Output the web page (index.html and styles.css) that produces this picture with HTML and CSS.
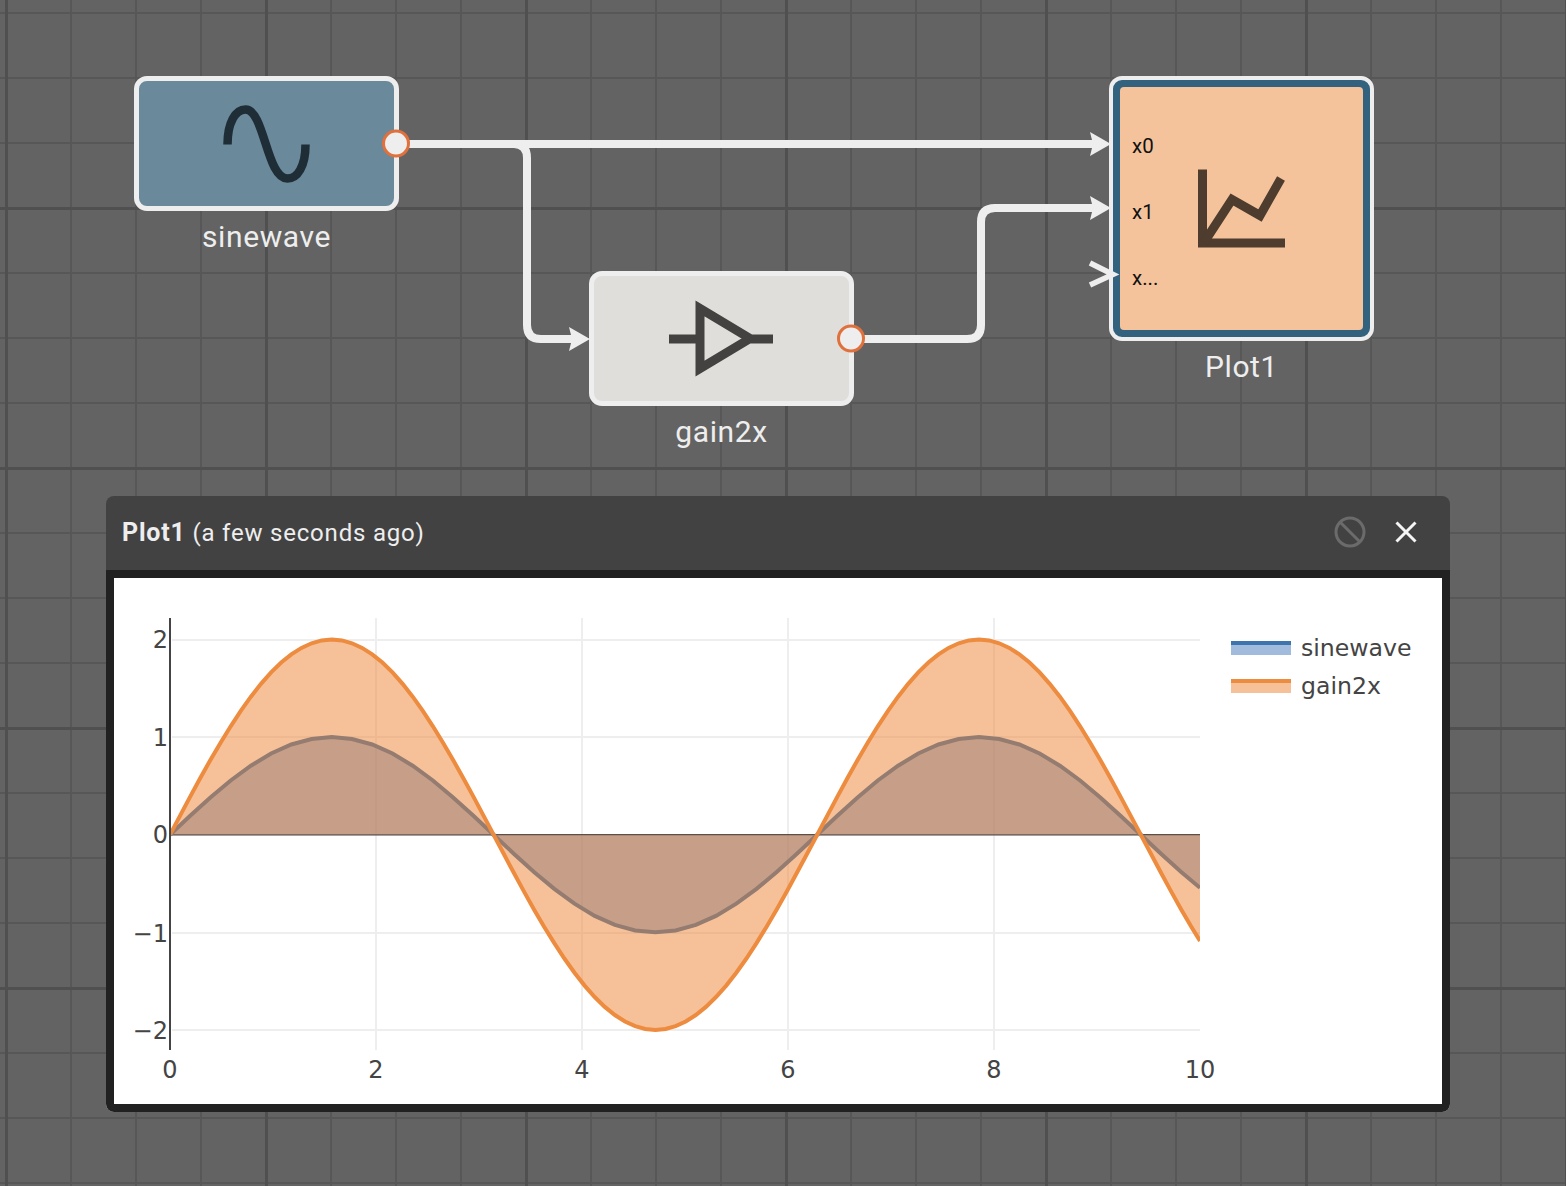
FILE: index.html
```html
<!DOCTYPE html>
<html lang="en">
<head>
    <meta charset="UTF-8">
    <meta name="viewport" content="width=device-width, initial-scale=1.0">
    <title>Plot1</title>
    <link rel="stylesheet" href="styles.css">
</head>
<body>
    <div class="canvas">
        <div class="block block-sine">
            <div class="node node-sine">
                <svg class="node-icon" width="100" height="100" viewBox="216.5 93.5 100 100">
                    <path class="icon-sine" d="M227 144 C227 122 235 109 245 109 C264 109 266 178 287 178 C297 178 305 166 305 144"/>
                </svg>
            </div>
            <div class="node-name">sinewave</div>
        </div>

        <div class="block block-gain">
            <div class="node node-gain">
                <svg class="node-icon" width="120" height="120" viewBox="662 278.5 120 120">
                    <path class="icon-gain" d="M669 338.5 H697 M750 338.5 H773 M700 308 V368 L750 338 Z"/>
                </svg>
            </div>
            <div class="node-name">gain2x</div>
        </div>

        <div class="block block-plot">
            <div class="node node-plot">
                <div class="plot-face">
                    <div class="ports">
                        <span>x0</span>
                        <span>x1</span>
                        <span>x...</span>
                    </div>
                    <svg class="node-icon" width="120" height="120" viewBox="1182 148.5 120 120">
                        <path class="icon-chart" d="M1202.5 169 V242.5 H1285"/>
                        <path class="icon-chart" d="M1204 242 L1232 199 L1260 215 L1281 178"/>
                    </svg>
                </div>
            </div>
            <div class="node-name">Plot1</div>
        </div>

        <svg class="wires" width="1566" height="1186" viewBox="0 0 1566 1186">
            <path class="wire" d="M398 144 H1096"/>
            <path class="wire" d="M514 144 Q527 144 527 158 V325 Q527 339 541 339 H576"/>
            <path class="wire" d="M864 339 H967 Q981 339 981 325 V222 Q981 208 995 208 H1096"/>
            <path class="arrow" d="M1090 132 L1111 144 L1090 156 L1093 144 Z"/>
            <path class="arrow" d="M1090 196 L1111 208 L1090 220 L1093 208 Z"/>
            <path class="arrow" d="M569 327 L590 339 L569 351 L572 339 Z"/>
            <path class="chevron" d="M1090 263 L1113 274.5 L1090 285"/>
            <circle class="port" cx="396" cy="143.5" r="12.5"/>
            <circle class="port" cx="851" cy="338.5" r="12.5"/>
        </svg>

        <div class="window">
            <div class="window-head">
                <div class="window-title"><b>Plot1</b> <span>(a few seconds ago)</span></div>
                <div class="window-tools">
                    <svg width="32" height="32" viewBox="0 0 32 32">
                        <circle class="tool-ban" cx="16" cy="16" r="14"/>
                        <path class="tool-ban" d="M6 6 L26 26"/>
                    </svg>
                    <svg width="24" height="24" viewBox="0 0 24 24">
                        <path class="tool-close" d="M2.5 2.5 L21.5 21.5 M21.5 2.5 L2.5 21.5"/>
                    </svg>
                </div>
            </div>
            <div class="window-body">
                <svg class="chart" width="1328" height="526" viewBox="114 578 1328 526">
                    <defs>
                        <clipPath id="plot-area"><rect x="170" y="610" width="1030" height="450"/></clipPath>
                    </defs>

                    <path class="grid" d="M376 618 V1050 M582 618 V1050 M788 618 V1050 M994 618 V1050"/>
                    <path class="grid" d="M172 640 H1200 M172 737 H1200 M172 933 H1200 M172 1030 H1200"/>
                    <path class="zero" d="M170 834.7 H1200"/>

                    <g clip-path="url(#plot-area)">
                        <path id="sine-fill" class="fill-blue"/>
                        <path id="sine-line" class="line-blue"/>
                        <path id="gain-fill" class="fill-orange"/>
                        <path id="gain-line" class="line-orange"/>
                    </g>

                    <path class="axis" d="M170 618 V1050"/>

                    <text class="tick" x="168" y="648" text-anchor="end">2</text>
                    <text class="tick" x="168" y="746" text-anchor="end">1</text>
                    <text class="tick" x="168" y="843" text-anchor="end">0</text>
                    <text class="tick" x="168" y="942" text-anchor="end">−1</text>
                    <text class="tick" x="168" y="1039" text-anchor="end">−2</text>

                    <text class="tick" x="170" y="1078" text-anchor="middle">0</text>
                    <text class="tick" x="376" y="1078" text-anchor="middle">2</text>
                    <text class="tick" x="582" y="1078" text-anchor="middle">4</text>
                    <text class="tick" x="788" y="1078" text-anchor="middle">6</text>
                    <text class="tick" x="994" y="1078" text-anchor="middle">8</text>
                    <text class="tick" x="1200" y="1078" text-anchor="middle">10</text>

                    <rect class="swatch-blue" x="1231" y="641" width="60" height="14"/>
                    <path class="line-blue" d="M1231 643 H1291"/>
                    <text class="tick legend-name" x="1301" y="656">sinewave</text>

                    <rect class="swatch-orange" x="1231" y="679" width="60" height="14"/>
                    <path class="line-orange" d="M1231 681 H1291"/>
                    <text class="tick legend-name" x="1301" y="694">gain2x</text>
                </svg>
            </div>
        </div>
    </div>
    <script src="chart.js"></script>
</body>
</html>
```

FILE: styles.css
```css
body {
    margin: 0;
    padding: 0;
    background: #636363;
    font-family: Roboto, Arial, sans-serif;
}
.canvas {
    position: relative;
    width: 1566px;
    height: 1186px;
    overflow: hidden;
    background-color: #636363;
    background-image:
        linear-gradient(to right, #505050 3px, transparent 3px),
        linear-gradient(to bottom, #505050 3px, transparent 3px),
        linear-gradient(to right, #575757 2px, transparent 2px),
        linear-gradient(to bottom, #575757 2px, transparent 2px);
    background-size: 260px 260px, 260px 260px, 65px 65px, 65px 65px;
    background-position: 5px 0, 0 207px, 5px 0, 0 12px;
}

.block {
    position: absolute;
    width: 265px;
    display: flex;
    flex-direction: column;
    align-items: center;
}
.block-sine { left: 134px; top: 76px; }
.block-gain { left: 589px; top: 271px; }
.block-plot { left: 1109px; top: 76px; }

.node {
    box-sizing: border-box;
    width: 265px;
    height: 135px;
    border: 5px solid #eeeeee;
    border-radius: 13px;
    display: flex;
    align-items: center;
    justify-content: center;
}
.node-sine { background: #6a899b; }
.node-gain { background: #e0dedb; }
.node-plot {
    height: 265px;
    border-width: 4px;
    background: #33627f;
    padding: 7px;
}
.plot-face {
    position: relative;
    flex: 1;
    align-self: stretch;
    background: #f4c39c;
    border-radius: 4px;
    display: flex;
    align-items: center;
    justify-content: center;
}
.node-icon {
    display: block;
}
.icon-sine {
    fill: none;
    stroke: #1f2d36;
    stroke-width: 8.5;
}
.icon-gain {
    fill: none;
    stroke: #444240;
    stroke-width: 9;
}
.icon-chart {
    fill: none;
    stroke: #4e3c2e;
    stroke-width: 9;
}
.node-name {
    margin-top: 8px;
    color: #eeeeee;
    font-size: 30px;
    line-height: 36px;
    letter-spacing: 0.6px;
}

.ports {
    position: absolute;
    left: 12px;
    top: 48px;
    display: flex;
    flex-direction: column;
    gap: 44px;
    color: #111111;
    font-size: 20.5px;
    line-height: 22px;
}

.wires {
    position: absolute;
    left: 0;
    top: 0;
    pointer-events: none;
}
.wire {
    fill: none;
    stroke: #eeeeee;
    stroke-width: 8;
}
.arrow {
    fill: #eeeeee;
}
.chevron {
    fill: none;
    stroke: #eeeeee;
    stroke-width: 5.5;
}
.port {
    fill: #eeeeee;
    stroke: #e0703c;
    stroke-width: 3;
}

.window {
    position: absolute;
    left: 106px;
    top: 496px;
    width: 1344px;
    height: 616px;
    border-radius: 8px;
    overflow: hidden;
    display: flex;
    flex-direction: column;
}
.window-head {
    box-sizing: border-box;
    height: 74px;
    background: #424242;
    padding: 0 32px 2px 16px;
    display: flex;
    align-items: center;
    justify-content: space-between;
}
.window-title {
    color: #eeeeee;
    font-size: 24px;
    letter-spacing: 0.8px;
    white-space: pre;
}
.window-title b {
    font-size: 25px;
    font-weight: 700;
    letter-spacing: 0.8px;
}
.window-tools {
    display: flex;
    align-items: center;
    gap: 28px;
}
.window-tools svg {
    display: block;
}
.tool-ban {
    fill: none;
    stroke: #6b6b6b;
    stroke-width: 3;
}
.tool-close {
    fill: none;
    stroke: #f5f5f5;
    stroke-width: 3;
}
.window-body {
    flex: 1;
    background: #ffffff;
    border: 8px solid #212121;
}
.chart {
    display: block;
}

.grid {
    fill: none;
    stroke: #eeeeee;
    stroke-width: 2;
}
.zero {
    fill: none;
    stroke: #444444;
    stroke-width: 1.5;
}
.axis {
    fill: none;
    stroke: #444444;
    stroke-width: 2;
}
.tick {
    fill: #444444;
    font-family: "DejaVu Sans", Verdana, sans-serif;
    font-size: 24px;
}
.legend-name {
    font-size: 23.6px;
}
.fill-blue {
    fill: rgba(65, 119, 185, 0.5);
}
.fill-orange {
    fill: rgba(237, 131, 51, 0.5);
}
.line-blue {
    fill: none;
    stroke: #3d74ad;
    stroke-width: 4;
}
.line-orange {
    fill: none;
    stroke: #ed8b3f;
    stroke-width: 4;
}
.swatch-blue {
    fill: #a0bbdc;
}
.swatch-orange {
    fill: #f6c199;
}
```

FILE: chart.js
```js
// plot scale, in the same coordinates as the svg viewBox
var X0 = 170, XSCALE = 103;
var Y0 = 834.7, YSCALE = 97.6;

function toPoint(t, gain) {
    var x = X0 + t * XSCALE;
    var y = Y0 - gain * Math.sin(t) * YSCALE;
    return x.toFixed(1) + " " + y.toFixed(1);
}

function drawTrace(name, gain, step) {
    var pts = [];
    for (var t = 0; t < 10; t += step) {
        pts.push(toPoint(t, gain));
    }
    pts.push(toPoint(10, gain));

    var line = "M" + pts.join(" L");
    var fill = line + " L1200 " + Y0 + " L" + X0 + " " + Y0 + " Z";
    document.getElementById(name + "-line").setAttribute("d", line);
    document.getElementById(name + "-fill").setAttribute("d", fill);
}

drawTrace("sine", 1, Math.PI / 16);
drawTrace("gain", 2, Math.PI / 32);
```
